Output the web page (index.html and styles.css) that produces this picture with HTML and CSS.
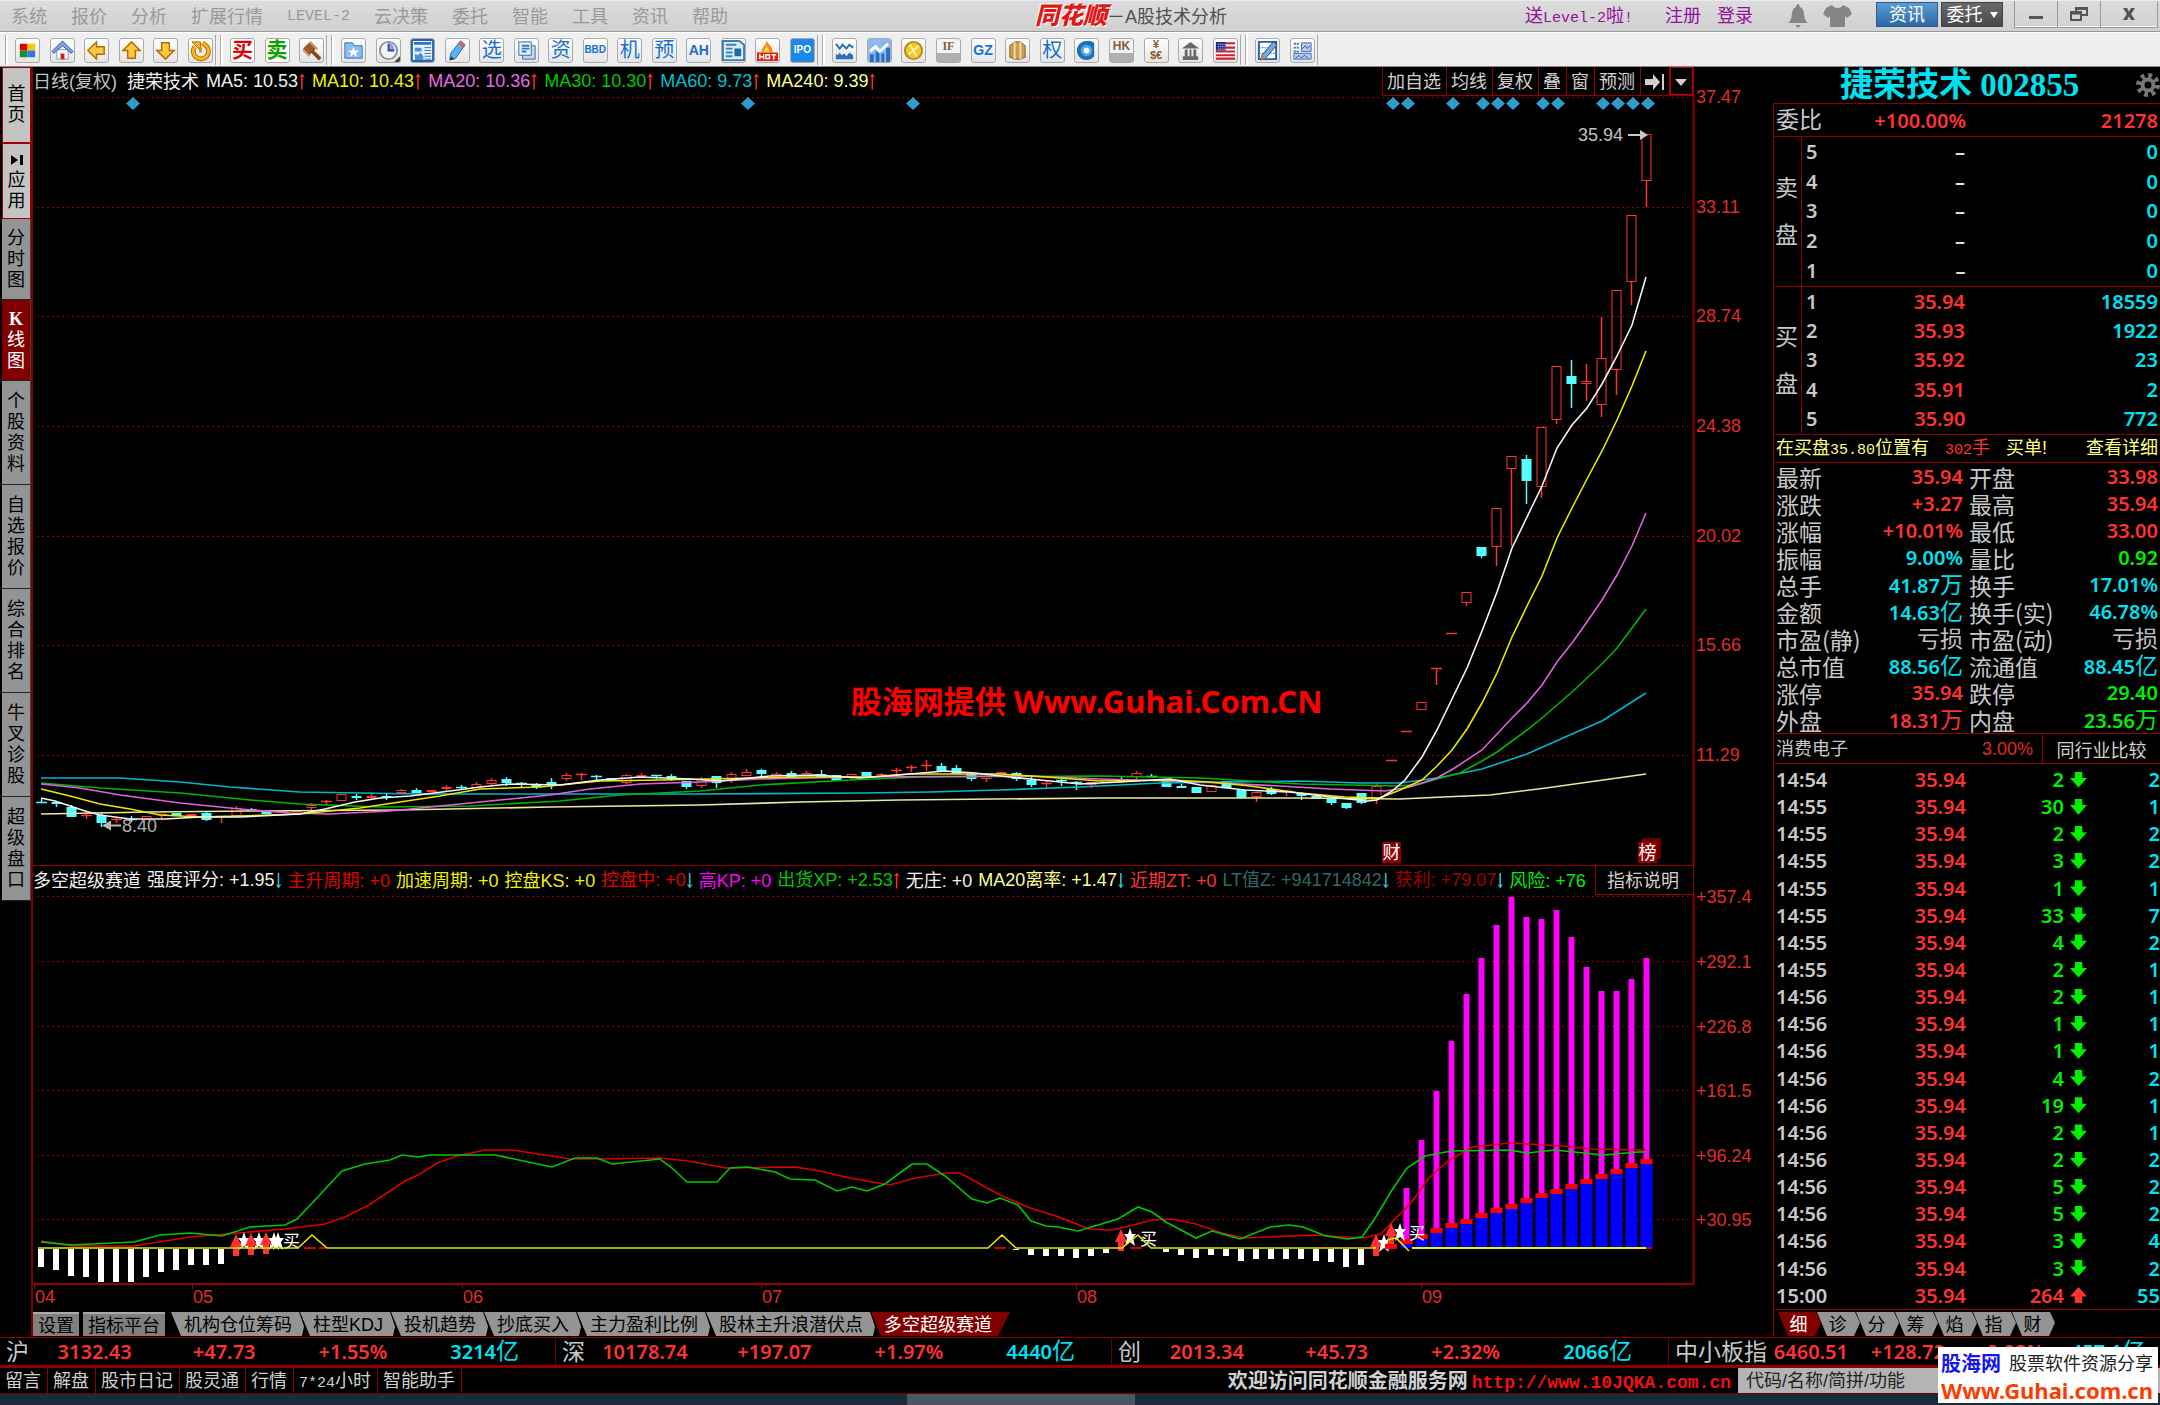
FILE: index.html
```html
<!DOCTYPE html>
<html lang="zh-CN">
<head>
<meta charset="utf-8">
<title>同花顺 - A股技术分析</title>
<link rel="stylesheet" href="styles.css">
</head>
<body>
<div class="app">
  <header class="titlebar">
    <nav class="menu">
      <button>系统</button><button>报价</button><button>分析</button><button>扩展行情</button><button class="latin">LEVEL-2</button><button>云决策</button><button>委托</button><button>智能</button><button>工具</button><button>资讯</button><button>帮助</button>
    </nav>
    <div class="brand"><b class="logo">同花顺</b><span>－</span><span>A股技术分析</span></div>
    <div class="account">
      <a href="#" class="promo">送<i>Level-2</i>啦<i>!</i></a>
      <a href="#">注册</a>
      <a href="#" class="login">登录</a>
      <svg class="bell" width="22" height="24" viewBox="0 0 22 24"><path d="M11 0c1.500 0 1.500 2 2 3 4 2 4 6 4.500 10 .5 3 1.500 4 3.500 6H1c2-2 3-3 3.500-6C5 9 5 5 9 3c.5-1 .5-3 2-3zM8 21h6l-3 3z" fill="#858585"/></svg>
      <svg class="shirt" width="29" height="22" viewBox="0 0 29 22"><path d="M9 0c2 4 9 4 11 0l6 3 3 6-5 4-2-2v11H7V11l-2 2-5-4 3-6z" fill="#858585"/></svg>
    </div>
    <div class="actions">
      <button class="act blue">资讯</button>
      <button class="act dark">委托<svg width="8" height="6" viewBox="0 0 8 6"><path d="M0 0h8L4 6z" fill="#fff"/></svg></button>
    </div>
    <div class="winctl">
      <button aria-label="最小化"><svg width="14" height="12" viewBox="0 0 14 12"><path d="M0 8h14v3H0z" fill="#555"/></svg></button>
      <button aria-label="还原"><svg width="18" height="14" viewBox="0 0 18 14"><path d="M6 4V1h11v7h-5M1 5h10v8H1zM1 6.500h10M6 2h11" fill="none" stroke="#555" stroke-width="2"/></svg></button>
      <button aria-label="关闭" class="close"><svg width="14" height="12" viewBox="0 0 14 12"><path d="M1 0h4l2 3.500L9 0h4L9.200 6 13 12H9L7 8.500 5 12H1l3.800-6z" fill="#555"/></svg></button>
    </div>
  </header>

  <div class="toolbar">
    <div class="group g1">
      <button aria-label="板块"><svg viewBox="0 0 24 24"><path d="M4 5h8v7H4z" fill="#e00000"/><path d="M12 5h8v7h-8z" fill="#f2c800"/><path d="M4 12h8v7H4z" fill="#1c8c2c"/><path d="M12 12h8v7h-8z" fill="#2a7be8"/></svg></button>
      <button aria-label="主页"><svg viewBox="0 0 24 24"><path d="M6 11h12v10H6z" fill="#f3f6fb" stroke="#8aa0c4"/><path d="M1 13L12 2l11 11-2 2-9-8-9 8z" fill="#7da3e0" stroke="#3a5c9c"/><path d="M10 15h4v6h-4z" fill="#d02010"/></svg></button>
      <button aria-label="后退"><svg viewBox="0 0 24 24"><path d="M3 12l9-9v5h8v8h-8v5z" fill="#ffc840" stroke="#b07000" stroke-width="1.500"/></svg></button>
      <button aria-label="向上"><svg viewBox="0 0 24 24"><path d="M12 3l9 9h-5v8H8v-8H3z" fill="#ffc840" stroke="#b07000" stroke-width="1.500"/></svg></button>
      <button aria-label="向下"><svg viewBox="0 0 24 24"><path d="M12 21l9-9h-5V4H8v8H3z" fill="#ffc840" stroke="#b07000" stroke-width="1.500"/></svg></button>
      <button aria-label="刷新"><svg viewBox="0 0 24 24"><path d="M6 8a8 8 0 1 0 12-1l-4-3" fill="none" stroke="#b07000" stroke-width="5"/><path d="M6 8a8 8 0 1 0 12-1l-4-3" fill="none" stroke="#ffb020" stroke-width="3"/><path d="M3 3h9v9z" fill="#ffb020" stroke="#b07000"/><path d="M12 8v6" stroke="#e08a10" stroke-width="3"/></svg></button>
    </div>
    <div class="group g2">
      <button class="t big red">买</button>
      <button class="t big green">卖</button>
      <button aria-label="拍卖"><svg viewBox="0 0 24 24"><path d="M4 10l7-7 6 6-7 7z" fill="#a05a28" stroke="#6c3810"/><path d="M12 12l9 9" stroke="#8a4818" stroke-width="4"/><path d="M3 11l7 7M10 3l8 8" stroke="#d09868" stroke-width="2"/></svg></button>
    </div>
    <div class="group g3">
      <button aria-label="自选"><svg viewBox="0 0 24 24"><path d="M3 4h8l2 3h8v13H3z" fill="#8cbcf0" stroke="#3a70b8"/><path d="M12 8l1.500 4H18l-3.500 2.500L16 19l-4-3-4 3 1.500-4.500L6 12h4.500z" fill="#fff"/></svg></button>
      <button aria-label="时间"><svg viewBox="0 0 24 24"><circle cx="12" cy="12" r="9" fill="#f2f4f8" stroke="#8c949c" stroke-width="2"/><path d="M12 4v8h6a7 7 0 0 0-6-8z" fill="#8aa0d8"/><path d="M12 5v7h6" fill="none" stroke="#30508c" stroke-width="2"/><path d="M24 18v6h-6z" fill="#444"/></svg></button>
      <button aria-label="报表"><svg viewBox="0 0 24 24"><path d="M1 1h22v22H1z" fill="#eaf3ff" stroke="#2a64b0" stroke-width="2"/><path d="M3 3h18v3H3z" fill="#2a74c8"/><path d="M4 9h7v4H4zM4 15l3 2 3-3 3 4v4H4z" fill="#4a90dc"/><path d="M14 9h7M14 12h7M14 15h7M14 18h7M14 21h7" stroke="#2a74c8"/></svg></button>
      <button aria-label="画笔"><svg viewBox="0 0 24 24"><path d="M15 2l5 4L10 20l-6 2 1-7z" fill="#58b4f0" stroke="#2068b0"/><path d="M15 2l5 4-2 3-5-4z" fill="#e06040"/><path d="M4 22l5-1-4-3z" fill="#333"/></svg></button>
      <button class="t">选</button>
      <button aria-label="多窗"><svg viewBox="0 0 24 24"><path d="M8 7h13v14H8z" fill="#c4d8f0" stroke="#3c68a8"/><path d="M4 3h13v14H4z" fill="#e8f2ff" stroke="#3c68a8"/><path d="M7 7h8M7 10h8M7 13h5" stroke="#3c78c8" stroke-width="2"/></svg></button>
      <button class="t">资</button>
      <button class="t xs">BBD</button>
      <button class="t">机</button>
      <button class="t">预</button>
      <button class="t md">AH</button>
      <button aria-label="新闻"><svg viewBox="0 0 24 24"><path d="M1 2h17l5 4v16H1z" fill="#d8ecfa" stroke="#3a80b0" stroke-width="2"/><path d="M4 6h11M4 10h7M4 14h7M4 18h7" stroke="#3a80b0" stroke-width="2"/><path d="M13 10h7v8h-7z" fill="#1c6ca0"/></svg></button>
      <button aria-label="热点"><svg viewBox="0 0 24 24"><path d="M11 1c1 5 7 6 6 13H6C5 8 11 8 11 1z" fill="#ff8820"/><path d="M11 7c1 3 3 4 3 7H8c0-3 3-4 3-7z" fill="#ffe040"/><path d="M1 14h22v9H1z" fill="#e02010"/><path d="M4 16v5M8 16v5M4 18.500h4M10.500 16.500h3.500v4h-3.500zM16 16.500h5M18.500 16.500v5" stroke="#fff" fill="none" stroke-width="1.500"/></svg></button>
      <button class="t xs ipo">IPO</button>
    </div>
    <div class="group g4">
      <button aria-label="走势"><svg viewBox="0 0 24 24"><path d="M3 5l4 5 3-4 4 4 3-4 4 3" fill="none" stroke="#2a70b8" stroke-width="2"/><path d="M3 21v-6l2 2 2-3 2 3 3-2 2 3 3-4 4 3v4z" fill="#2a70b8"/></svg></button>
      <button aria-label="上涨"><svg viewBox="0 0 24 24"><path d="M0 0h24v24H0z" fill="#8cb8ec"/><path d="M2 24v-8h4v8zM8 24V13h4v11zM14 24v-9h3v9zM19 24V9h4v15z" fill="#2c6cc0"/><path d="M2 13l6-5 4 5 9-8" fill="none" stroke="#fff" stroke-width="3"/></svg></button>
      <button aria-label="金币"><svg viewBox="0 0 24 24"><circle cx="12" cy="12" r="9" fill="#f0c830" stroke="#b88a10" stroke-width="2"/><path d="M8 6l4 6-5 4M12 12l5-5M12 12l3 6" fill="none" stroke="#fff4a8" stroke-width="2"/></svg></button>
      <button class="t sm stock serif">IF</button>
      <button class="t md bold">GZ</button>
      <button aria-label="期货"><svg viewBox="0 0 24 24"><path d="M4 7l5-4h6l5 4v12l-5 2H9l-5-2z" fill="#c8a050" stroke="#806020"/><path d="M9 3v18M15 3v18" stroke="#f4dca0" stroke-width="2"/></svg></button>
      <button class="t">权</button>
      <button aria-label="基金"><svg viewBox="0 0 24 24"><path d="M12 2a10 10 0 1 0 8 16V4a10 10 0 0 0-8-2z" fill="#1c70b8"/><circle cx="12" cy="12" r="6" fill="#58a8e0"/><circle cx="12" cy="12" r="3" fill="#fff"/></svg></button>
      <button class="t sm stock">HK</button>
      <button class="t fx" aria-label="外汇">¥<br>$€</button>
      <button aria-label="债券"><svg viewBox="0 0 24 24"><path d="M12 3l9 7H3zM4 18h16v4H4zM6 11h3v7H6zM11 11h2v7h-2zM15 11h3v7h-3z" fill="#686868"/></svg></button>
      <button aria-label="美股"><svg viewBox="0 0 24 24"><path d="M2 3h20v18H2z" fill="#fff"/><path d="M2 4.500h20M2 9h20M2 13h20M2 17h20M2 20.500h20" stroke="#d02030" stroke-width="2.200"/><path d="M2 3h10v9H2z" fill="#1c2c88"/><path d="M4 5.500h7M4 8h7M4 10.500h7" stroke="#fff" stroke-dasharray="1 1"/></svg></button>
    </div>
    <div class="group g5">
      <button aria-label="公式"><svg viewBox="0 0 24 24"><path d="M3 3h18v18H3z" fill="#fff" stroke="#2c5cb0" stroke-width="2"/><path d="M3 9h18M3 15h18" stroke="#2c8cd0" stroke-dasharray="2 1"/><path d="M18 3l4 3L10 20l-5 2 1-5z" fill="#78a8e0" stroke="#204c90"/><path d="M5 22l5-2-4-3z" fill="#e08020"/></svg></button>
      <button aria-label="布局"><svg viewBox="0 0 24 24"><path d="M3 5h6M3 9h6M3 13h6" stroke="#3c64b0" stroke-width="2" stroke-dasharray="2 1"/><path d="M11 4h10v9H11zM3 15h18v6H3z" fill="#b8ccf0" stroke="#4c70b8"/><path d="M12 10l3-3 2 3 3-3M5 20l3-3 3 3 3-3 4 3" fill="none" stroke="#2c50a0"/></svg></button>
    </div>
  </div>

  <main class="work">
    <nav class="side">
      <button class="s1 lite"><span>首页</span></button>
      <button class="s1 lite"><span><svg width="14" height="12" viewBox="0 0 14 12"><path d="M1 1l7 5-7 5zM10 1h3v10h-3z"/></svg>应用</span></button>
      <button class="s2"><span>分时图</span></button>
      <button class="s2 on"><span><b>K</b>线图</span></button>
      <button class="s3"><span>个股资料</span></button>
      <button class="s3"><span>自选报价</span></button>
      <button class="s3"><span>综合排名</span></button>
      <button class="s3"><span>牛叉诊股</span></button>
      <button class="s3"><span>超级盘口</span></button>
    </nav>

    <section class="charts">
      <div class="head">
        <div class="legend ma">
          <span class="gray">日线(复权)</span><span class="name">捷荣技术</span>
          <span class="up">MA5: 10.53</span><span class="up yellow">MA10: 10.43</span><span class="up violet">MA20: 10.36</span><span class="up green">MA30: 10.30</span><span class="up teal">MA60: 9.73</span><span class="up cream">MA240: 9.39</span>
        </div>
        <div class="tools">
          <button>加自选</button><button>均线</button><button>复权</button><button>叠</button><button>窗</button><button>预测</button>
          <button aria-label="隐藏右栏"><svg width="19" height="16" viewBox="0 0 19 16"><path d="M0 5h8V0l7 8-7 8v-5H0zM17 0h2v16h-2z" fill="#d0d0d0"/></svg></button>
          <button aria-label="更多" class="more"><svg width="12" height="7" viewBox="0 0 12 7"><path d="M0 0h12L6 7z" fill="#d0d0d0"/></svg></button>
        </div>
      </div>
      <div class="price">
        <svg id="price" class="plot" viewBox="33 96 1740 769"></svg>
        <p class="mark">股海网提供 Www.Guhai.Com.CN</p>
      </div>
      <div class="head second">
        <div class="legend">
          <span>多空超级赛道</span><span class="dn">强度评分: +1.95</span><span class="red">主升周期: +0</span><span class="yellow">加速周期: +0</span><span class="yellow">控盘KS: +0</span><span class="dn red">控盘中: +0</span><span class="magenta">高KP: +0</span><span class="up green">出货XP: +2.53</span><span>无庄: +0</span><span class="dn cream">MA20离率: +1.47</span><span class="coral">近期ZT: +0</span><span class="dn slate">LT值Z: +941714842</span><span class="dn maroon">获利: +79.07</span><span class="lime">风险: +76</span>
        </div>
        <div class="tools"><button class="note">指标说明</button></div>
      </div>
      <svg id="ind" class="plot" viewBox="33 895 1740 417"></svg>
      <div class="tabs">
        <button class="box">设置</button><button class="box">指标平台</button>
        <div class="slants">
          <button>机构仓位筹码</button><button>柱型KDJ</button><button>投机趋势</button><button>抄底买入</button><button>主力盈利比例</button><button>股林主升浪潜伏点</button><button class="on">多空超级赛道</button>
        </div>
      </div>
    </section>

    <aside class="quote">
      <h1>捷荣技术 002855
        <svg class="gear" width="24" height="24" viewBox="0 0 24 24"><circle cx="12" cy="12" r="9.500" fill="none" stroke="#777" stroke-width="5" stroke-dasharray="3.700 3.760"/><circle cx="12" cy="12" r="5.500" fill="none" stroke="#777" stroke-width="4"/></svg>
      </h1>
      <div class="ratio"><span>委比</span><b class="r">+100.00%</b><b class="r">21278</b></div>
      <div class="book">
        <div class="side-label"><span>卖</span><span>盘</span></div>
        <table>
          <tr><th>5</th><td class="w">–</td><td>0</td></tr>
          <tr><th>4</th><td class="w">–</td><td>0</td></tr>
          <tr><th>3</th><td class="w">–</td><td>0</td></tr>
          <tr><th>2</th><td class="w">–</td><td>0</td></tr>
          <tr><th>1</th><td class="w">–</td><td>0</td></tr>
        </table>
      </div>
      <div class="book buy">
        <div class="side-label"><span>买</span><span>盘</span></div>
        <table>
          <tr><th>1</th><td class="r">35.94</td><td>18559</td></tr>
          <tr><th>2</th><td class="r">35.93</td><td>1922</td></tr>
          <tr><th>3</th><td class="r">35.92</td><td>23</td></tr>
          <tr><th>4</th><td class="r">35.91</td><td>2</td></tr>
          <tr><th>5</th><td class="r">35.90</td><td>772</td></tr>
        </table>
      </div>
      <div class="alert"><span>在买盘<i>35.80</i>位置有</span><span class="r"><i>302</i>手</span><span>买单!</span><a href="#">查看详细</a></div>
      <table class="stats">
        <tr><th>最新</th><td class="r">35.94</td><th>开盘</th><td class="r">33.98</td></tr>
        <tr><th>涨跌</th><td class="r">+3.27</td><th>最高</th><td class="r">35.94</td></tr>
        <tr><th>涨幅</th><td class="r">+10.01%</td><th>最低</th><td class="r">33.00</td></tr>
        <tr><th>振幅</th><td>9.00%</td><th>量比</th><td class="g">0.92</td></tr>
        <tr><th>总手</th><td>41.87<u>万</u></td><th>换手</th><td>17.01%</td></tr>
        <tr><th>金额</th><td>14.63<u>亿</u></td><th>换手(实)</th><td>46.78%</td></tr>
        <tr><th>市盈(静)</th><td class="n"><u>亏损</u></td><th>市盈(动)</th><td class="n"><u>亏损</u></td></tr>
        <tr><th>总市值</th><td>88.56<u>亿</u></td><th>流通值</th><td>88.45<u>亿</u></td></tr>
        <tr><th>涨停</th><td class="r">35.94</td><th>跌停</th><td class="g">29.40</td></tr>
        <tr><th>外盘</th><td class="r">18.31<u>万</u></td><th>内盘</th><td class="g">23.56<u>万</u></td></tr>
      </table>
      <div class="sector"><span>消费电子</span><span class="pct">3.00%</span><button>同行业比较</button></div>
      <table class="ticks">
        <tr><th>14:54</th><td>35.94</td><td class="g">2</td><td class="ar"></td><td>2</td></tr>
        <tr><th>14:55</th><td>35.94</td><td class="g">30</td><td class="ar"></td><td>1</td></tr>
        <tr><th>14:55</th><td>35.94</td><td class="g">2</td><td class="ar"></td><td>2</td></tr>
        <tr><th>14:55</th><td>35.94</td><td class="g">3</td><td class="ar"></td><td>2</td></tr>
        <tr><th>14:55</th><td>35.94</td><td class="g">1</td><td class="ar"></td><td>1</td></tr>
        <tr><th>14:55</th><td>35.94</td><td class="g">33</td><td class="ar"></td><td>7</td></tr>
        <tr><th>14:55</th><td>35.94</td><td class="g">4</td><td class="ar"></td><td>2</td></tr>
        <tr><th>14:55</th><td>35.94</td><td class="g">2</td><td class="ar"></td><td>1</td></tr>
        <tr><th>14:56</th><td>35.94</td><td class="g">2</td><td class="ar"></td><td>1</td></tr>
        <tr><th>14:56</th><td>35.94</td><td class="g">1</td><td class="ar"></td><td>1</td></tr>
        <tr><th>14:56</th><td>35.94</td><td class="g">1</td><td class="ar"></td><td>1</td></tr>
        <tr><th>14:56</th><td>35.94</td><td class="g">4</td><td class="ar"></td><td>2</td></tr>
        <tr><th>14:56</th><td>35.94</td><td class="g">19</td><td class="ar"></td><td>1</td></tr>
        <tr><th>14:56</th><td>35.94</td><td class="g">2</td><td class="ar"></td><td>1</td></tr>
        <tr><th>14:56</th><td>35.94</td><td class="g">2</td><td class="ar"></td><td>2</td></tr>
        <tr><th>14:56</th><td>35.94</td><td class="g">5</td><td class="ar"></td><td>2</td></tr>
        <tr><th>14:56</th><td>35.94</td><td class="g">5</td><td class="ar"></td><td>2</td></tr>
        <tr><th>14:56</th><td>35.94</td><td class="g">3</td><td class="ar"></td><td>4</td></tr>
        <tr><th>14:56</th><td>35.94</td><td class="g">3</td><td class="ar"></td><td>2</td></tr>
        <tr><th>15:00</th><td>35.94</td><td class="r">264</td><td class="ar rise"></td><td>55</td></tr>
      </table>
      <div class="minitabs"><button class="on">细</button><button>诊</button><button>分</button><button>筹</button><button>焰</button><button>指</button><button>财</button></div>
    </aside>
  </main>

  <div class="indices">
    <div class="ix"><span>沪</span><b>3132.43</b><b>+47.73</b><b>+1.55%</b><b class="c">3214<u>亿</u></b></div>
    <div class="ix"><span>深</span><b>10178.74</b><b>+197.07</b><b>+1.97%</b><b class="c">4440<u>亿</u></b></div>
    <div class="ix"><span>创</span><b>2013.34</b><b>+45.73</b><b>+2.32%</b><b class="c">2066<u>亿</u></b></div>
    <div class="ix last"><span>中小板指</span><b>6460.51</b><b>+128.72</b><b>+0.83%</b><b class="c">457.1<u>亿</u></b></div>
  </div>
  <footer class="foot">
    <button>留言</button><button>解盘</button><button>股市日记</button><button>股灵通</button><button>行情</button><button><span class="mono">7*24</span>小时</button><button>智能助手</button>
    <p class="welcome">欢迎访问同花顺金融服务网<a href="#">http://www.10JQKA.com.cn</a></p>
    <input class="search" type="text" aria-label="搜索" placeholder="代码/名称/简拼/功能">
  </footer>
  <div class="taskbar"><i></i></div>
  <div class="stamp"><div><b>股海网</b><span>股票软件资源分享</span></div><strong>Www.Guhai.com.cn</strong></div>
</div>
<script src="chart.js"></script>
</body>
</html>
```
FILE: styles.css
```css
* { box-sizing: border-box; }
body { margin: 0; background: #000; color: #c8c8c8; font: 18px/24px "Liberation Sans", "Noto Sans CJK SC", sans-serif; overflow: hidden; }
button, input { font: inherit; color: inherit; border: 0; padding: 0; margin: 0; background: none; white-space: nowrap; }
a { color: inherit; text-decoration: none; }
p, h1 { margin: 0; }
svg { display: block; flex: none; }
.app { position: relative; display: flex; flex-direction: column; min-height: 100vh; }

/* title bar */
.titlebar { display: flex; height: 32px; background: linear-gradient(#dcdcdc, #d0d0d0); border-top: 1px solid #e8eaf0; border-bottom: 1px solid #999; white-space: nowrap; color: #999; line-height: 32px; }
.menu { display: flex; gap: 24px; padding-left: 11px; flex: none; }
.latin { font-family: "Liberation Mono", monospace; font-size: 15px; }
.brand { display: flex; flex: 1; justify-content: flex-end; color: #505050; padding-right: 298px; }
.logo { color: #e01818; font-size: 24px; line-height: 29px; font-weight: 900; font-style: italic; text-shadow: 0 0 2px #fff, 1px 1px #fff, -1px -1px #fff, 1px 0 #e01818; }
.account { display: flex; align-items: center; color: #94109a; }
.promo { margin-right: 32px; }
.promo i { font: 15px "Liberation Mono", monospace; }
.login { margin-left: 16px; }
.bell { margin-left: 34px; }
.shirt { margin-left: 14px; }
.actions { display: flex; gap: 3px; padding-top: 1px; margin-left: 24px; }
.act { height: 25px; width: 62px; line-height: 24px; color: #fff; border: 1px solid #456; }
.blue { background: linear-gradient(#5a9bd4, #2c68a4); border-color: #2c5c90; }
.dark { display: flex; align-items: center; justify-content: center; gap: 7px; background: linear-gradient(#6a6a6a, #484848); border-color: #444; }
.winctl { display: flex; margin: 0 2px 0 11px; height: 27px; border: 1px solid #999; border-top: 0; box-shadow: inset 0 -1px #fff; }
.winctl button { width: 43px; display: grid; place-items: center; border-right: 1px solid #999; }
.winctl .close { width: 56px; border-right: 0; }

/* tool bar */
.toolbar { display: flex; align-items: center; gap: 4px; padding: 1px 0 0 5px; height: 35px; background: #efefef; border-top: 1px solid #fff; border-bottom: 1px solid #888; }
.group { display: flex; justify-content: space-between; align-items: center; height: 30px; border-right: 1px solid #aaa; padding: 0 2px 0 9px; border-left: 1px solid #aaa; box-shadow: inset 2px 0 #fff; }
.group button { width: 25px; height: 25px; border: 1px solid #aaa; border-radius: 3px; background: linear-gradient(#fff, #e4e4e4); overflow: hidden; }
.group svg { width: 23px; height: 23px; }
.g1 { width: 211px; }
.g2 { width: 107px; }
.g3 { width: 487px; }
.g4 { width: 419px; }
.g5 { width: 73px; }
.t { color: #1870d0; font-size: 20px; line-height: 22px; text-align: center; }
.t.big { font-weight: 700; font-size: 21px; background: #fff; }
.t.big.red { color: #e00000; }
.t.big.green { color: #10a000; }
.t.md { font: 700 14px/22px "Liberation Sans Narrow", "Liberation Sans", sans-serif; }
.t.sm { font: 700 12px/22px "Liberation Sans Narrow", "Liberation Sans", sans-serif; }
.t.xs { font: 700 10px/22px "Liberation Sans Narrow", "Liberation Sans", sans-serif; }
.group .ipo { background: #1c88e8; color: #fff; }
.group .stock { color: #8a6038; line-height: 14px; background: linear-gradient(#f4f4f4 0 60%, #b0b0b0 60%); padding-bottom: 8px; }
.t.serif { font-family: "Liberation Serif", serif; }
.t.fx { color: #8a5c30; font: 700 11px/11px "Liberation Sans", sans-serif; }

/* work area */
.work { display: grid; grid-template-columns: 33px minmax(0, 1fr) 387px; }
.side { display: flex; flex-direction: column; padding-left: 2px; border-right: 2px solid #7c0000; }
.side button { display: grid; place-items: center; width: 29px; background: #949494; border-bottom: 1px solid #222; border-right: 1px solid #444; color: #000; }
.side span { display: block; width: 18px; line-height: 21px; white-space: normal; word-break: break-all; text-align: center; }
.side svg { margin: 4px 2px; }
.side b { display: block; font-family: "Liberation Serif", serif; }
.side .lite { background: #c4c4c4; border: 1px solid #a00000; }
.side .s1 { height: 76px; }
.side .s2 { height: 81px; }
.side .s3 { height: 104px; }
.side .on { background: #800000; color: #fff; }
.charts { display: flex; flex-direction: column; min-width: 0; }
.head { display: flex; justify-content: space-between; height: 29px; margin-right: 79px; border-right: 1px solid #900000; }
.second { border-top: 1px solid #900000; height: 30px; }
.legend { display: flex; gap: 6px; white-space: nowrap; color: #f0f0f0; line-height: 31px; overflow: hidden; }
.ma { gap: 7px; }
.ma .name { margin-left: 3px; }
.up, .dn { display: flex; align-items: center; }
.up::after, .dn::after { content: ""; width: 6px; height: 16px; background: #ff2a2a; margin-left: 1px; clip-path: polygon(50% 0, 100% 25%, 60% 20%, 60% 100%, 35% 100%, 35% 20%, 0 25%); }
.dn::after { background: #30c0d8; clip-path: polygon(50% 100%, 100% 72%, 62% 78%, 62% 0, 36% 0, 36% 78%, 0 72%); }
.gray { color: #c0c0c0; }
.yellow { color: #f0f000; }
.violet { color: #e868e8; }
.green { color: #00c800; }
.teal { color: #00c0d0; }
.cream { color: #ffff90; }
.red { color: #e00000; }
.magenta { color: #f0f; }
.coral { color: #ff3232; }
.slate { color: #306868; }
.maroon { color: #a00000; }
.lime { color: #00f000; }
.tools { display: flex; flex: none; border-left: 1px solid #900000; border-bottom: 1px solid #900000; }
.tools button { padding: 2px 5px 0 4px; border-right: 1px solid #900000; color: #d0d0d0; display: flex; align-items: center; }
.tools .more { border: 1px solid #c00000; }
.tools .note { padding: 2px 14px 0 11px; border: 0; }
.plot { width: 100%; height: auto; overflow: visible; }
.price { position: relative; }
.mark { position: absolute; left: 47%; top: 76%; width: 500px; color: #f00; font: 700 31px/42px "Noto Sans", "Noto Sans CJK SC", sans-serif; white-space: nowrap; }
.tabs { display: flex; gap: 4px; height: 25px; color: #000; }
.tabs .box { height: 24px; line-height: 24px; padding: 0 5px; background: #808080; border-top: 2px solid #aaa; }
.slants { display: flex; }
.slants button { height: 24px; line-height: 26px; background: #949494; padding: 0 12px 0 15px; margin-right: -6px; clip-path: polygon(2px 0, calc(100% - 5px) 0, 100% 60%, calc(100% - 2px) 100%, 12px 100%); }
.slants .on { background: #800000; color: #fff; padding-right: 18px; clip-path: polygon(2px 0, 100% 0, calc(100% - 12px) 100%, 12px 100%); }

/* quote panel */
.quote { border-left: 1px solid #900000; font-size: 23px; line-height: 27px; }
.quote b, .quote table, .ix b { font-family: "Noto Sans", "Noto Sans CJK SC", sans-serif; font-size: 20px; font-weight: 600; }
.quote table { border-collapse: collapse; width: 100%; table-layout: fixed; color: #00e0f0; text-align: right; }
.quote td, .quote th { padding: 0; }
.quote th { color: #c8c8c8; text-align: left; font-weight: inherit; }
u { text-decoration: none; font: 400 23px/24px "Noto Sans CJK SC", sans-serif; }
.quote .r, .ix b { color: #ff3232; }
.quote .g { color: #00f000; }
.quote .w { color: #e0e0e0; }
.quote h1 { height: 36px; margin-left: -1px; background: #000; display: flex; color: #00e0f0; padding-left: 67px; font: 700 33px/36px "Liberation Serif", "Noto Sans CJK SC", serif; align-items: center; justify-content: space-between; white-space: nowrap; }
.ratio { display: grid; grid-template-columns: 98px 92px 1fr; height: 33px; line-height: 33px; border-top: 1px solid #900000; text-align: right; padding: 0 2px 0 2px; }
.ratio span { text-align: left; }
.book { display: grid; grid-template-columns: 27px 1fr; height: 150px; border-top: 1px solid #900000; padding-right: 2px; }
.book tr { height: 29px; line-height: 28px; }
.book th { width: 40px; padding-left: 4px; }
.book td:nth-child(2) { width: 124px; }
.book table { border-left: 1px solid #900000; height: 149px; }
.buy { height: 148px; }
.buy table { height: 147px; }
.side-label { display: flex; flex-direction: column; justify-content: center; gap: 20px; padding-left: 1px; }
.alert { display: flex; height: 29px; line-height: 26px; border-top: 1px solid #900000; border-bottom: 1px solid #900000; font-size: 18px; color: #ffff80; padding: 0 2px; white-space: nowrap; }
.alert i { font: 15px "Liberation Mono", monospace; }
.alert span { margin-right: 16px; }
.alert a { margin-left: auto; }
.stats { height: 270px; line-height: 24px; }
.quote .stats th { font: 400 23px/24px "Noto Sans CJK SC", sans-serif; padding-left: 2px; width: 104px; white-space: nowrap; }
.quote .stats th:first-child { width: 100px; }
.quote .stats th:nth-child(3) { padding-left: 4px; }
.quote .stats td { padding: 0 2px 0 0; white-space: nowrap; }
.stats td:nth-child(2) { width: 91px; }
.quote .stats .n { color: #c0c0c0; }
.stats tr { height: 27px; }
.sector { display: flex; height: 31px; border-top: 1px solid #900000; border-bottom: 1px solid #900000; font-size: 18px; line-height: 31px; padding-left: 2px; }
.pct { margin-left: auto; padding-right: 9px; color: #e02828; }
.sector button { width: 118px; border-left: 1px solid #900000; color: #d0d0d0; padding-top: 2px; }
.quote .ticks { height: 546px; border-bottom: 1px solid #900000; line-height: 27px; border-collapse: separate; border-spacing: 0; padding-top: 2px; }
.quote .ticks th { width: 70px; padding-left: 2px; }
.ticks td:nth-child(2) { width: 122px; color: #ff3232; }
.ticks td:nth-child(3) { width: 98px; }
.ticks td:nth-child(4) { width: 24px; }
.ar::before { content: ""; display: block; width: 17px; height: 16px; margin-left: 6px; background: #00f000; clip-path: polygon(28% 0, 72% 0, 72% 40%, 100% 40%, 50% 100%, 0 40%, 28% 40%); }
.ar.rise::before { background: #ff3232; transform: rotate(180deg); }
.minitabs { display: flex; margin-top: 2px; margin-left: 2px; }
.minitabs button { width: 45px; height: 24px; font-size: 18px; line-height: 26px; background: #949494; color: #000; margin-right: -6px; clip-path: polygon(2px 0, calc(100% - 5px) 0, 100% 45%, calc(100% - 6px) 100%, 12px 100%); }
.minitabs .on { background: #800000; color: #fff; }

/* index strip, footer */
.indices { display: grid; grid-template-columns: 556fr 556fr 557fr 491fr; height: 31px; border-top: 1px solid #900000; border-bottom: 3px solid #900000; line-height: 28px; white-space: nowrap; }
.ix { display: grid; grid-template-columns: 42fr 90fr 124fr 132fr 132fr 36fr; text-align: right; border-right: 1px solid #700000; font-size: 23px; }
.ix span { text-align: left; padding-left: 6px; }
.ix .c { color: #00e0f0; }
.ix u { line-height: 20px; }
.ix.last { grid-template-columns: 99fr 80fr 97fr 99fr 101fr 15fr; border: 0; }
.foot { display: flex; height: 26px; border-bottom: 1px solid #700000; line-height: 26px; color: #d0d0d0; }
.foot button { padding: 0 6px 0 5px; border-right: 1px solid #900000; }
.mono { font: 15px "Liberation Mono", monospace; }
.welcome { flex: 1; text-align: right; font-weight: 700; font-size: 20px; white-space: nowrap; }
.welcome a { margin: 0 7px 0 4px; color: #f01010; font: 700 18px/24px "Liberation Mono", monospace; }
.search { width: 422px; background: #b4b4b4; padding-left: 8px; color: #222; }
.search::placeholder { color: #222; opacity: 1; }
.taskbar { flex: 1; display: flex; min-height: 11px; background: #1c2b38; padding-left: 42%; }
.taskbar i { width: 228px; background: #4a5660; }
.stamp { position: absolute; right: 2px; bottom: 2px; width: 220px; height: 56px; background: #fff; padding: 4px 3px 0; white-space: nowrap; overflow: hidden; }
.stamp div { display: flex; gap: 8px; line-height: 27px; color: #222; font-size: 18px; }
.stamp b { color: #1414f0; font-size: 20px; }
.stamp strong { display: block; color: #ff3c00; font: 700 22px/24px "Noto Sans", sans-serif; }
```
FILE: chart.js
```js
const NS = 'http://www.w3.org/2000/svg';
const X = i => 41.5 + 15 * i;
function add(svg, tag, attrs, text) {
  const el = document.createElementNS(NS, tag);
  for (const k in attrs) el.setAttribute(k, attrs[k]);
  if (text) el.textContent = text;
  svg.appendChild(el);
  return el;
}
const line = (s, x1, y1, x2, y2, stroke, w = 1, dash = '') =>
  add(s, 'line', { x1, y1, x2, y2, stroke, 'stroke-width': w, 'stroke-dasharray': dash });
const rect = (s, x, y, width, height, fill, stroke = 'none') =>
  add(s, 'rect', { x, y, width, height, fill, stroke });
const curve = (s, str, stroke) =>
  add(s, 'polyline', { points: str, fill: 'none', stroke, 'stroke-width': 1.6 });
const label = (s, x, y, t, fill = '#e02c2c', size = 18) =>
  add(s, 'text', { x, y, fill, 'font-size': size }, t);

/* price pane */
const p = document.getElementById('price');
[[97, '37.47'], [207, '33.11'], [316, '28.74'], [426, '24.38'], [536, '20.02'], [645, '15.66'], [755, '11.29']].forEach(([y, t]) => {
  line(p, 37, y + .5, 1690, y + .5, '#900000', 1, '2 3');
  label(p, 1696, y + 6, t);
});
line(p, 1693.5, 96, 1693.5, 865, '#900000', 2);
[133, 748, 913, 1393, 1408, 1453, 1483, 1498, 1513, 1543, 1558, 1603, 1618, 1633, 1648].forEach(x =>
  add(p, 'path', { d: `M${x - 7} 103.500l7-6.500 7 6.500-7 6.500z`, fill: '#2e9bcb' }));

/* colour, body top, body bottom, high, low */
const candles = `c802 803 799 803,c802 804 802 807,c807 817 805 817,r815 816 813 819,c815 823 813 827,r819 820 817 823,c819 820 816 822,r816 820 816 820,r814 815 814 818,c813 816 813 816,r814 816 814 816,c813 820 811 821,r816 817 817 823,r808 816 806 816,c809 811 808 811,c811 814 811 814,r811 812 811 813,r810 812 810 812,r805 808 803 810,r801 802 800 805,r794 801 794 801,c796 798 794 800,r796 798 794 800,c796 798 794 800,r790 793 789 793,c790 793 788 793,r790 792 790 792,r787 789 785 791,c787 788 785 790,r784 788 782 788,r780 784 778 786,c779 783 777 786,c783 784 782 788,c785 787 783 789,c782 785 778 789,r775 779 773 781,r774 775 773 780,c776 777 775 780,c778 781 778 781,r775 783 774 784,r775 777 773 777,c775 776 775 779,c776 778 774 781,c781 787 781 789,r779 786 777 788,c776 783 776 788,r774 781 772 783,r772 776 769 776,c770 774 769 777,r774 775 772 775,c773 777 771 777,r773 776 771 776,c774 777 770 777,c775 781 775 781,r774 778 774 779,c772 777 772 777,r774 777 773 777,r770 771 768 774,r767 768 765 772,r765 766 760 771,c766 771 763 771,c768 774 765 774,c774 779 772 781,r776 779 774 782,r772 774 772 774,c773 779 772 781,c780 785 777 787,r783 784 781 789,c780 781 779 786,c782 783 781 790,r782 785 782 788,r779 783 779 783,c779 782 776 782,r773 777 771 781,c776 777 774 777,c780 787 780 787,c786 788 784 788,c787 793 787 793,r785 792 785 792,c781 788 781 788,c790 798 790 798,r792 797 792 802,c789 794 787 795,r791 792 791 796,c793 796 792 800,c796 799 795 799,c799 803 798 805,c803 808 803 809,c793 803 793 804,r786 798 783 804,r760 761 760 761,r731 732 731 732,r702 710 702 710,r668 669 668 685,r633 634 633 634,r592 603 592 606,c547 556 547 558,r508 547 508 566,r456 469 456 546,c459 481 455 504,r427 487 427 498,r366 420 366 424,c376 384 360 408,r381 384 364 401,r358 405 317 417,r290 370 290 395,r215 282 215 305,r134 181 134 207`.split(',');
candles.forEach((c, i) => {
  const [t, b, h, l] = c.slice(1).split(' ').map(Number), x = X(i);
  const up = c[0] === 'r', col = up ? '#ff3232' : '#54ffff';
  if (h < t) line(p, x, h, x, t, col, 1.5);
  if (l > b) line(p, x, b, x, l, col, 1.5);
  if (b - t < 2) line(p, x - 5.5, t + .5, x + 5.5, t + .5, col, 1.5);
  else rect(p, x - 4.5, t + .5, 9, b - t - 1, up ? 'none' : col, col);
});
curve(p, '41,814 150,812 250,811 400,810 550,807 700,805 800,802 900,800 1100,798 1300,798 1400,799 1443,797 1490,795 1546,788 1646,774', '#e8e8a0');
curve(p, '41,778 120,778 180,782 230,787 300,792 420,794 700,794 860,793 930,792 1000,790 1080,787 1160,783 1300,781 1360,783 1400,783 1437,778 1482,769 1527,754 1572,734 1602,721 1646,693', '#00b8cc');
curve(p, '41,783 100,788 180,793 250,800 300,804 380,807 470,806 560,801 620,795 700,791 760,785 850,780 920,777 1100,776 1200,778 1300,784 1400,786 1420,784 1437,779 1460,773 1482,761 1497,752 1512,741 1527,730 1542,718 1557,705 1572,692 1587,678 1602,664 1617,648 1632,628 1646,609', '#00b400');
curve(p, '41,784 80,788 120,795 180,803 240,809 290,813 330,814 390,811 430,807 490,801 550,795 590,789 640,784 700,782 760,779 860,777 1030,776 1100,779 1200,782 1280,786 1330,789 1385,791 1410,787 1437,778 1453,769 1482,750 1497,734 1512,718 1527,703 1542,685 1557,662 1572,643 1587,622 1602,600 1617,575 1632,546 1646,513', '#e060e0');
curve(p, '41,789 70,796 100,804 130,809 160,815 200,817 240,816 300,814 360,808 400,802 440,796 480,789 540,787 600,781 660,780 800,777 870,777 910,774 1000,774 1060,778 1100,781 1170,780 1210,782 1250,786 1300,793 1345,797 1380,798 1400,790 1422,780 1437,766 1452,750 1467,729 1482,703 1497,673 1512,637 1527,606 1542,576 1557,538 1572,508 1587,479 1602,451 1617,420 1632,386 1646,351', '#e8e800');
curve(p, '41,798 55,801 70,806 85,811 100,815 130,819 165,819 200,817 240,817 300,814 325,809 355,802 380,798 410,796 450,791 480,787 510,784 560,785 600,780 640,777 690,779 720,781 770,776 815,775 860,778 910,774 945,771 975,773 1010,777 1040,780 1080,784 1120,782 1170,779 1200,785 1245,790 1290,792 1330,797 1367,801 1377,800 1392,791 1405,780 1422,757 1437,730 1452,699 1467,668 1482,631 1497,592 1512,548 1527,517 1542,486 1557,448 1572,425 1587,408 1602,384 1617,356 1632,325 1646,277', '#f4f4f4');
label(p, 1578, 141, '35.94', '#c0c0c0');
add(p, 'path', { d: 'M1628 134h12v-4l8 5-8 5v-4h-12z', fill: '#c8c8c8' });
label(p, 122, 832, '8.40', '#b0b0b0');
add(p, 'path', { d: 'M121 824.500h-10v-4l-9 5 9 5v-4h10z', fill: '#b8b8b8' });
rect(p, 1642, 838, 19, 21, '#680000');
[[1382, '财'], [1638, '榜']].forEach(([x, t]) => { rect(p, x, 842, 19, 21, '#900000'); label(p, x + .5, 859, t, '#fff'); });

/* indicator pane */
const q = document.getElementById('ind');
[[896, '+357.4'], [961, '+292.1'], [1026, '+226.8'], [1090, '+161.5'], [1155, '+96.24'], [1219, '+30.95']].forEach(([y, t]) => {
  line(q, 37, y + .5, 1690, y + .5, '#900000', 1, '2 3');
  label(q, 1696, y + 7, t);
});
line(q, 1693.5, 895, 1693.5, 1284, '#900000', 2);
line(q, 33, 1284, 1694, 1284, '#900000', 2);
[[34, '04'], [192, '05'], [462, '06'], [761, '07'], [1076, '08'], [1421, '09']].forEach(([x, t]) => {
  line(q, x + .5, 1284, x + .5, 1289, '#900000');
  label(q, x + 1, 1303, t);
});
const down = { 0: '1267 1270 1276 1277 1282 1282 1282 1277 1272 1270 1265 1265 1264', 65: '1250 1255 1256 1256 1258 1256 1253 1251', 75: '1252 1255 1258 1255 1256 1261 1259 1259 1259 1259 1261 1262 1267 1265' };
for (const k in down) down[k].split(' ').forEach((y, j) => rect(q, X(+k + j) - 3.5, 1249, 6, y - 1249, '#fff'));
[1188, 1140, 1091, 1041, 994, 958, 925, 897, 917, 919, 910, 937, 967, 991, 991, 979, 958].forEach((y, j) => rect(q, X(91 + j) - 3, y, 6, 1240 - y, '#f0f'));
[1239, 1234, 1228, 1223, 1219, 1213, 1208, 1204, 1198, 1193, 1189, 1184, 1179, 1174, 1169, 1163, 1159].forEach((y, j) => {
  rect(q, X(91 + j) - 6, y, 12, 1248 - y, '#00f');
  rect(q, X(91 + j) - 6, y, 12, 5, '#f00');
});
curve(q, '41,1241 72,1246 134,1246 190,1237 250,1232 285,1229 325,1224 345,1217 367,1206 387,1193 405,1181 420,1174 437,1163 457,1156 485,1150 513,1150 570,1159 600,1159 660,1158 688,1161 726,1168 795,1167 820,1171 850,1178 890,1185 915,1178 947,1173 960,1173 1000,1195 1030,1208 1059,1217 1089,1229 1111,1230 1126,1227 1152,1220 1172,1219 1196,1224 1222,1233 1244,1238 1314,1235 1362,1238 1381,1234 1396,1218 1411,1203 1429,1178 1448,1161 1473,1147 1510,1143 1562,1146 1592,1149 1646,1150', '#d80000');
curve(q, '41,1242 72,1245 134,1242 160,1235 190,1233 222,1236 250,1227 285,1225 297,1219 315,1200 342,1171 365,1164 390,1160 402,1155 418,1157 430,1155 495,1155 552,1167 575,1158 597,1158 612,1164 660,1159 672,1168 687,1182 717,1182 730,1168 748,1167 775,1172 790,1179 815,1180 837,1191 852,1187 867,1191 885,1184 912,1164 927,1164 945,1176 972,1199 987,1203 1000,1198 1018,1205 1031,1221 1046,1226 1058,1227 1078,1231 1118,1219 1138,1207 1152,1212 1166,1222 1196,1238 1212,1231 1240,1239 1270,1227 1289,1225 1303,1227 1326,1236 1348,1239 1362,1237 1374,1220 1392,1190 1407,1168 1425,1156 1451,1151 1510,1150 1527,1153 1555,1150 1603,1155 1638,1152 1646,1152', '#00c800');
[[304, 326], [994, 1010], [1130, 1142], [1646, 1652]].forEach(([a, b]) => line(q, a, 1248, b, 1248, '#d00000', 2, '12 3'));

/* buy signals: arrow, star, caption */
const star = (x, y) => add(q, 'path', { d: `M${x} ${y - 9}l2 6h4l-3 4 2 8-5-4-5 4 2-8-3-4h4z`, fill: '#fff' });
const arrow = (x, y) => add(q, 'path', { d: `M${x} ${y}l6 13h-3v9h-6v-9h-3z`, fill: '#ff3232' });
[244, 259, 274].forEach(x => star(x, 1241));
[236, 251, 266].forEach((x, j) => arrow(x, 1234 - j));
star(278, 1241);
label(q, 283, 1247, '买', '#fff', 17);
arrow(1121, 1229);
star(1130, 1237);
label(q, 1140, 1245, '买', '#fff', 17);
arrow(1376, 1234);
star(1384, 1243);
arrow(1391, 1223);
star(1400, 1232);
label(q, 1409, 1239, '买', '#fff', 16);
rect(q, 1385, 1244, 12, 5, '#f00');
curve(q, '1387,1240 1396,1238 1409,1251', '#e8e800');
curve(q, '38,1248 298,1248 312,1235 327,1248 988,1248 1002,1235 1016,1248 1122,1248 1138,1235 1151,1248 1376,1248', '#e8e800');
line(q, 1412, 1248, 1646, 1248, '#f0f000', 2);
```
